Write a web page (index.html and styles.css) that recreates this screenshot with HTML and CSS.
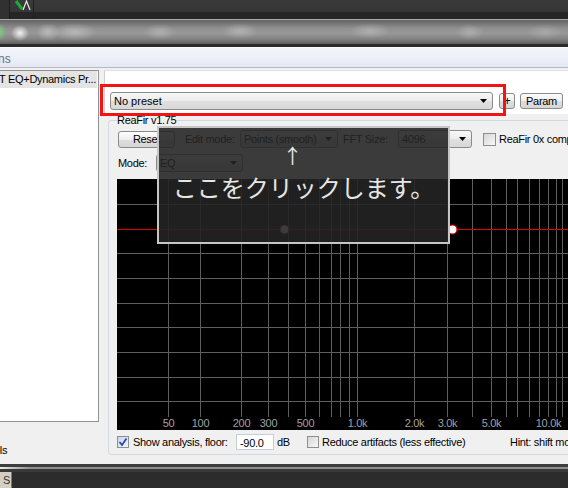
FILE: index.html
```html
<!DOCTYPE html>
<html lang="ja">
<head>
    <meta charset="UTF-8">
    <title>ReaFir</title>
    <link rel="stylesheet" href="styles.css">
</head>
<body>
    <div class="screen">
        <div class="host-bar">
            <div class="host-seg"></div>
            <div class="host-icon">
                <svg width="20" height="14" viewBox="0 0 20 14">
                    <path d="M3 1 L9 9" stroke="#1fa83a" stroke-width="3" fill="none"/>
                    <path d="M10 10 L13.5 1 L17 10" stroke="#e8e8e8" stroke-width="1.2" fill="none"/>
                </svg>
            </div>
            <div class="host-rest"></div>
        </div>
        <div class="host-strip"></div>

        <div class="window">
            <div class="titlebar"><span>ns</span></div>
            <div class="window-body">
                <div class="chain">
                    <div class="chain-list">
                        <div class="chain-item">T EQ+Dynamics Pr...</div>
                    </div>
                    <div class="chain-foot">ols</div>
                </div>

                <div class="plugin">
                    <div class="preset-bar">
                        <div class="combo combo-preset">
                            <span>No preset</span>
                            <svg class="arrow" width="7" height="4" viewBox="0 0 7 4"><polygon points="0,0 7,0 3.5,4" fill="#000"/></svg>
                        </div>
                        <button class="btn btn-plus">+</button>
                        <button class="btn btn-param">Param</button>
                    </div>

                    <fieldset class="group">
                        <legend>ReaFir v1.75</legend>
                        <div class="row">
                            <button class="btn btn-reset">Reset</button>
                            <span class="label label-edit">Edit mode:</span>
                            <div class="combo combo-points">
                                <span>Points (smooth)</span>
                                <svg class="arrow" width="7" height="4" viewBox="0 0 7 4"><polygon points="0,0 7,0 3.5,4" fill="#000"/></svg>
                            </div>
                            <span class="label label-fft">FFT Size:</span>
                            <div class="combo combo-fft">
                                <span>4096</span>
                                <svg class="arrow" width="7" height="4" viewBox="0 0 7 4"><polygon points="0,0 7,0 3.5,4" fill="#000"/></svg>
                            </div>
                            <span class="check check-comp"></span>
                            <span class="label">ReaFir 0x compensation</span>
                        </div>
                        <div class="row row-mode">
                            <span class="label label-mode">Mode:</span>
                            <div class="combo combo-mode">
                                <span>EQ</span>
                                <svg class="arrow" width="7" height="4" viewBox="0 0 7 4"><polygon points="0,0 7,0 3.5,4" fill="#000"/></svg>
                            </div>
                        </div>

                        <svg class="graph" width="460" height="251" viewBox="0 0 460 251">
                            <rect width="460" height="251" fill="#000"/>
                            <g stroke="#5e5e5e" stroke-width="1">
                                <line x1="51.5" y1="0" x2="51.5" y2="238"/>
                                <line x1="83.5" y1="0" x2="83.5" y2="238"/>
                                <line x1="124.5" y1="0" x2="124.5" y2="238"/>
                                <line x1="151.5" y1="0" x2="151.5" y2="238"/>
                                <line x1="171.5" y1="0" x2="171.5" y2="238"/>
                                <line x1="188.5" y1="0" x2="188.5" y2="238"/>
                                <line x1="202.5" y1="0" x2="202.5" y2="238"/>
                                <line x1="214.5" y1="0" x2="214.5" y2="238"/>
                                <line x1="223.5" y1="0" x2="223.5" y2="238"/>
                                <line x1="232.5" y1="0" x2="232.5" y2="238"/>
                                <line x1="240.5" y1="0" x2="240.5" y2="238"/>
                                <line x1="297.5" y1="0" x2="297.5" y2="238"/>
                                <line x1="330.5" y1="0" x2="330.5" y2="238"/>
                                <line x1="355.5" y1="0" x2="355.5" y2="238"/>
                                <line x1="374.5" y1="0" x2="374.5" y2="238"/>
                                <line x1="389.5" y1="0" x2="389.5" y2="238"/>
                                <line x1="400.5" y1="0" x2="400.5" y2="238"/>
                                <line x1="412.5" y1="0" x2="412.5" y2="238"/>
                                <line x1="422.5" y1="0" x2="422.5" y2="238"/>
                                <line x1="431.5" y1="0" x2="431.5" y2="238"/>
                                <line x1="439.5" y1="0" x2="439.5" y2="238"/>
                                <line x1="445.5" y1="0" x2="445.5" y2="238"/>
                                <line x1="451.5" y1="0" x2="451.5" y2="238"/>
                                <line x1="0" y1="25.5" x2="460" y2="25.5"/>
                                <line x1="0" y1="74.5" x2="460" y2="74.5"/>
                                <line x1="0" y1="99.5" x2="460" y2="99.5"/>
                                <line x1="0" y1="124.5" x2="460" y2="124.5"/>
                                <line x1="0" y1="148.5" x2="460" y2="148.5"/>
                                <line x1="0" y1="173.5" x2="460" y2="173.5"/>
                                <line x1="0" y1="198.5" x2="460" y2="198.5"/>
                                <line x1="0" y1="222.5" x2="460" y2="222.5"/>
                            </g>
                            <line x1="0" y1="50.5" x2="460" y2="50.5" stroke="#e00000" stroke-width="1"/>
                            <circle cx="167.5" cy="50.5" r="4.5" fill="#fff" stroke="#e00000" stroke-width="1.2"/>
                            <circle cx="335.5" cy="50.5" r="4.5" fill="#fff" stroke="#e00000" stroke-width="1.2"/>
                            <g class="freq" text-anchor="middle">
                                <text x="51.5" y="248">50</text>
                                <text x="83.5" y="248">100</text>
                                <text x="124.5" y="248">200</text>
                                <text x="151.5" y="248">300</text>
                                <text x="188.5" y="248">500</text>
                                <text x="240.5" y="248">1.0k</text>
                                <text x="297.5" y="248">2.0k</text>
                                <text x="330.5" y="248">3.0k</text>
                                <text x="374.5" y="248">5.0k</text>
                                <text x="431.5" y="248">10.0k</text>
                            </g>
                        </svg>

                        <div class="row row-bottom">
                            <span class="check check-on">
                                <svg width="10" height="10" viewBox="0 0 10 10"><path d="M1.5 5 L4 8 L8.5 1.5" stroke="#2a4aa8" stroke-width="1.8" fill="none"/></svg>
                            </span>
                            <span class="label label-show">Show analysis, floor:</span>
                            <span class="field">-90.0</span>
                            <span class="label label-db">dB</span>
                            <span class="check check-small"></span>
                            <span class="label label-reduce">Reduce artifacts (less effective)</span>
                            <span class="label">Hint: shift mouse</span>
                        </div>
                    </fieldset>
                </div>
            </div>
        </div>

        <div class="host-footer">
            <span class="s-btn">S</span>
        </div>

        <div class="highlight"></div>
        <div class="callout">
            <div class="callout-arrow">↑</div>
            <div class="callout-text">ここをクリックします。</div>
        </div>
    </div>
</body>
</html>
```

FILE: styles.css
```css
* {
    box-sizing: border-box;
}

html, body {
    margin: 0;
    padding: 0;
}

body {
    width: 568px;
    height: 488px;
    overflow: hidden;
    font-family: "Liberation Sans", Arial, sans-serif;
    font-size: 11px;
    letter-spacing: -0.3px;
    color: #111;
    background: #2c2c2c;
}

.screen {
    position: relative;
    width: 568px;
    height: 488px;
    overflow: hidden;
    display: flex;
    flex-direction: column;
}

/* host (REAPER) chrome around the window */
.host-bar {
    height: 20px;
    flex-shrink: 0;
    display: flex;
    border-bottom: 1px solid #a8a8a8;
    background: linear-gradient(#393939 0, #363636 12px, #262626 12px);
}

.host-seg {
    width: 10px;
    border-right: 1px solid #1c1c1c;
    background: #313131;
}

.host-icon {
    width: 24px;
    padding: 0 2px 0 3px;
    border-right: 1px solid #202020;
}

.host-icon svg {
    display: block;
}

.host-rest {
    flex: 1;
}

.host-strip {
    height: 27px;
    flex-shrink: 0;
    border-bottom: 3px solid #2b2b2b;
    background-color: #858585;
    background-image:
        radial-gradient(6px 9px at 0px 12px, rgba(120, 210, 120, 0.9), rgba(120, 210, 120, 0)),
        radial-gradient(9px 8px at 20px 13px, rgba(245, 245, 245, 0.95), rgba(245, 245, 245, 0)),
        radial-gradient(12px 9px at 48px 12px, rgba(210, 210, 210, 0.6), rgba(210, 210, 210, 0)),
        radial-gradient(22px 9px at 75px 12px, rgba(210, 210, 210, 0.55), rgba(210, 210, 210, 0)),
        radial-gradient(16px 8px at 160px 12px, rgba(200, 200, 200, 0.5), rgba(200, 200, 200, 0)),
        radial-gradient(18px 8px at 240px 11px, rgba(205, 205, 205, 0.5), rgba(205, 205, 205, 0)),
        radial-gradient(20px 8px at 370px 11px, rgba(200, 200, 200, 0.5), rgba(200, 200, 200, 0)),
        radial-gradient(14px 8px at 470px 12px, rgba(195, 195, 195, 0.5), rgba(195, 195, 195, 0)),
        radial-gradient(18px 8px at 545px 12px, rgba(190, 190, 190, 0.45), rgba(190, 190, 190, 0)),
        linear-gradient(#646464, #909090 35%, #989898 55%, #828282 80%, #5e5e5e);
}

/* FX window */
.window {
    display: flex;
    flex-direction: column;
    flex-shrink: 0;
}

.titlebar {
    height: 21px;
    border-top: 1px solid #fafbfe;
    border-bottom: 1px solid #b4b9c4;
    background: linear-gradient(#f4f6fb, #e5e9f3);
    padding-top: 4px;
}

.titlebar span {
    display: block;
    margin-left: -2px;
    font-size: 12px;
    letter-spacing: 0;
    color: #5d6c80;
}

.window-body {
    height: 396px;
    display: flex;
    padding-top: 2px;
    background: #f0f0f0;
}

.chain {
    width: 99px;
    flex-shrink: 0;
    display: flex;
    flex-direction: column;
}

.chain-list {
    height: 352px;
    background: #fff;
    border: 1px solid #8f9195;
    border-left: none;
}

.chain-item {
    height: 17px;
    margin-right: 1px;
    padding-top: 2px;
    background: #e4e4e4;
    white-space: nowrap;
    overflow: hidden;
    margin-left: -1px;
    color: #000;
}

.chain-foot {
    margin-top: 22px;
    margin-left: -6px;
    color: #000;
}

.plugin {
    width: 464px;
    flex-shrink: 0;
    margin-left: 5px;
}

.preset-bar {
    height: 44px;
    display: flex;
    align-items: flex-start;
    padding: 21px 0 0 5px;
    background: #fff;
    border-left: 1px solid #cfcfcf;
    border-top: 1px solid #e2e2e2;
}

.preset-bar > * {
    flex-shrink: 0;
}

.combo {
    display: flex;
    align-items: center;
    height: 18px;
    padding-left: 3px;
    border: 1px solid #8a8a8a;
    border-radius: 3px;
    background: linear-gradient(#f8f8f8, #ececec 50%, #e0e0e0 51%, #d8d8d8);
    color: #000;
    white-space: nowrap;
    overflow: hidden;
}

.combo .arrow {
    margin-left: auto;
    margin-right: 5px;
    flex-shrink: 0;
}

.combo-preset {
    width: 383px;
    letter-spacing: 0;
}

.btn {
    height: 16px;
    padding: 0;
    font: inherit;
    letter-spacing: inherit;
    color: #000;
    border: 1px solid #8a8a8a;
    border-radius: 3px;
    background: linear-gradient(#fdfdfd, #eeeeee 50%, #dedede 51%, #d6d6d6);
}

.btn-plus {
    width: 16px;
    margin: 1px 0 0 6px;
    font-size: 12px;
    line-height: 12px;
}

.btn-param {
    width: 43px;
    margin: 1px 0 0 5px;
}

.group {
    width: 470px;
    min-width: 0;
    margin: 0 0 0 4px;
    padding: 0 0 4px 8px;
    border: 1px solid #d3d8e2;
    border-radius: 3px;
}

.group legend {
    padding: 0;
    line-height: 12px;
    color: #000;
}

.row {
    display: flex;
    align-items: center;
    height: 18px;
    margin-top: 4px;
    white-space: nowrap;
}

.row > * {
    flex-shrink: 0;
}

.row-mode {
    margin-top: 6px;
}

.label {
    color: #000;
}

.btn-reset {
    width: 57px;
    height: 17px;
    margin-left: 1px;
}

.label-edit {
    width: 55px;
    margin-left: 10px;
}

.combo-points {
    width: 98px;
}

.label-fft {
    width: 55px;
    margin-left: 5px;
}

.combo-fft {
    width: 74px;
}

.check {
    display: inline-block;
    width: 13px;
    height: 13px;
    border: 1px solid #8e8f8f;
    background: linear-gradient(135deg, #d6d6d6, #f8f8f8);
}

.check-comp {
    margin: 0 3px 0 11px;
}

.label-mode {
    width: 38px;
    margin-left: 1px;
}

.combo-mode {
    width: 87px;
}

.graph {
    display: block;
    margin-top: 7px;
}

.freq text {
    font-family: "Liberation Sans", Arial, sans-serif;
    font-size: 11px;
    letter-spacing: -0.3px;
    fill: #a0a0a0;
}

.row-bottom {
    height: 16px;
    margin-top: 4px;
}

.check-on {
    width: 12px;
    height: 12px;
    padding: 0;
    background: linear-gradient(135deg, #c8d4ea, #f4f7fc);
}

.check-on svg {
    display: block;
}

.label-show {
    width: 103px;
    margin-left: 4px;
}

.field {
    width: 38px;
    height: 16px;
    padding: 2px 0 0 3px;
    background: #fff;
    border: 1px solid #c6cdd9;
    color: #000;
}

.label-db {
    width: 30px;
    margin-left: 3px;
}

.check-small {
    width: 12px;
    height: 12px;
}

.label-reduce {
    width: 188px;
    margin-left: 3px;
}

.host-footer {
    flex: 1;
    display: flex;
    align-items: flex-end;
    background-color: #2c2c2c;
    background-image:
        linear-gradient(to right, rgba(255, 255, 255, 0.85), rgba(255, 255, 255, 0) 30px),
        linear-gradient(#3e3e3e 0, #3e3e3e 3px, #8e8e8e 3px, #8e8e8e 5px, #393939 5px, #393939 8px, #2c2c2c 8px);
    background-size: 100% 2px, 100% 100%;
    background-position: 0 3px, 0 0;
    background-repeat: no-repeat;
}

.s-btn {
    width: 12px;
    height: 16px;
    padding: 2px 0 0 3px;
    background: #d3d0c1;
    border-right: 1px solid #7a7a72;
    color: #333;
    letter-spacing: 0;
}

/* annotation overlays */
.highlight {
    position: absolute;
    left: 100px;
    top: 84px;
    width: 406px;
    height: 32px;
    border: 3px solid #f01414;
}

.callout {
    position: absolute;
    left: 157px;
    top: 126px;
    width: 293px;
    height: 118px;
    border: 2px solid #c6c6c6;
    background: rgba(36, 36, 36, 0.89);
    display: flex;
    flex-direction: column;
    align-items: center;
    font-family: "Noto Sans CJK JP", "Noto Sans", sans-serif;
    letter-spacing: 0;
    color: #e6e6e6;
}

.callout-arrow {
    margin-top: 16px;
    margin-right: 22px;
    font-size: 20px;
    line-height: 24px;
}

.callout-text {
    margin-top: 4px;
    font-size: 24px;
    line-height: 30px;
}
```
